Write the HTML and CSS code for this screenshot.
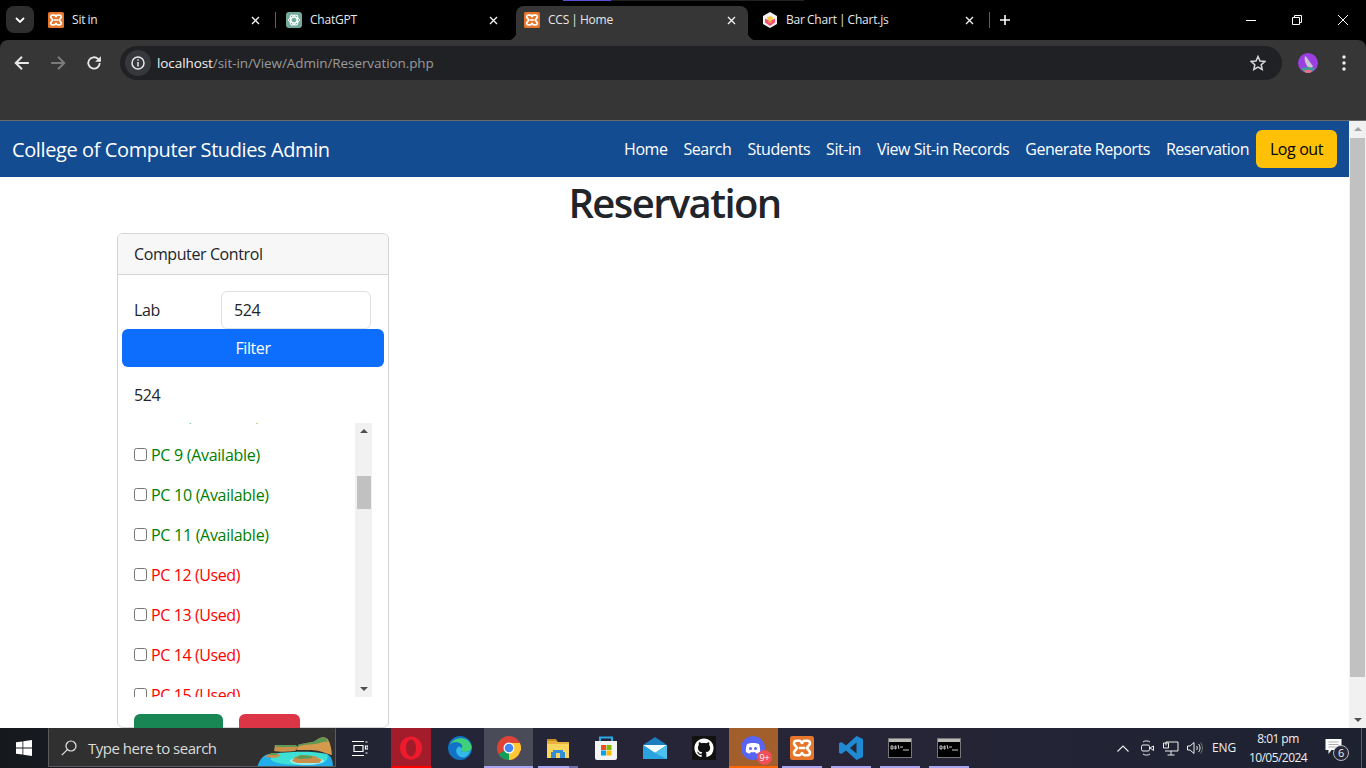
FILE: index.html
```html
<!DOCTYPE html>
<html lang="en">
<head>
<meta charset="utf-8">
<title>CCS | Home</title>
<link rel="stylesheet" href="styles.css">
</head>
<body>
<svg class="defs" width="0" height="0" aria-hidden="true">
  <symbol id="xampp" viewBox="0 0 16 16">
    <rect width="16" height="16" rx="1.500" fill="#e5762b"/>
    <path d="M4.200 3.200h2.300c1 0 1 1.500 1.500 1.500s.5-1.500 1.500-1.500h2.300a1.600 1.600 0 0 1 1.100 2.700L11.200 8l1.700 2.100a1.600 1.600 0 0 1-1.100 2.700H9.500c-1 0-1-1.500-1.500-1.500s-.5 1.500-1.500 1.500H4.200a1.600 1.600 0 0 1-1.100-2.700L4.800 8 3.100 5.900a1.600 1.600 0 0 1 1.100-2.700zM6 8h4" fill="none" stroke="#fff" stroke-width="1.700"/>
  </symbol>
  <symbol id="terminal" viewBox="0 0 24 20">
    <rect x=".5" y=".5" width="23" height="19" fill="#000" stroke="#777"/>
    <rect x="1" y="1" width="22" height="3" fill="#bbb"/>
    <path d="M3 8h2v3H3zM7 8h1v3H7zM10 7l1 4M12 9h3M15 12h6" stroke="#ccc" fill="none"/>
  </symbol>
  <symbol id="close" viewBox="0 0 9 9">
    <path d="M1 1l7 7M8 1L1 8" stroke="#f0f0f0" stroke-width="1.400"/>
  </symbol>
</svg>

<header class="browser">
  <div class="tabstrip">
    <span class="strip-mark"></span>
    <button class="tab-toggle">
      <svg width="10" height="6" viewBox="0 0 10 6"><path d="M1 1l4 4 4-4" fill="none" stroke="#fff" stroke-width="1.800"/></svg>
    </button>
    <div class="tab tab-sep">
      <svg class="favicon"><use href="#xampp"/></svg>
      <span class="tab-title">Sit in</span>
      <svg class="tab-close"><use href="#close"/></svg>
    </div>
    <div class="tab">
      <svg class="favicon" viewBox="0 0 16 16">
        <rect width="16" height="16" rx="3" fill="#74aa9c"/>
        <g fill="none" stroke="#fff" stroke-width="1">
          <ellipse cx="8" cy="8" rx="5.500" ry="2.800"/>
          <ellipse cx="8" cy="8" rx="5.500" ry="2.800" transform="rotate(60 8 8)"/>
          <ellipse cx="8" cy="8" rx="5.500" ry="2.800" transform="rotate(120 8 8)"/>
        </g>
      </svg>
      <span class="tab-title">ChatGPT</span>
      <svg class="tab-close"><use href="#close"/></svg>
    </div>
    <div class="tab tab-active">
      <svg class="favicon"><use href="#xampp"/></svg>
      <span class="tab-title">CCS | Home</span>
      <svg class="tab-close"><use href="#close"/></svg>
    </div>
    <div class="tab tab-sep">
      <svg class="favicon" viewBox="0 0 16 16">
        <path d="M8 0l7 4v8l-7 4-7-4V4z" fill="#f6f2f2"/>
        <path d="M3 6.500l5 2.500 5-2.500v4L8 14l-5-3.500z" fill="#f0506e"/>
        <path d="M5 5.500L8 4l3 1.500v2L8 9 5 7.500z" fill="#f7c948"/>
        <path d="M8 9l2-1v2l-2 1.500L6 10V8z" fill="#f58a5a"/>
      </svg>
      <span class="tab-title">Bar Chart | Chart.js</span>
      <svg class="tab-close"><use href="#close"/></svg>
    </div>
    <button class="tab-new">
      <svg width="12" height="12" viewBox="0 0 12 12"><path d="M6 1v10M1 6h10" stroke="#fff" stroke-width="1.600"/></svg>
    </button>
    <div class="win-controls">
      <span class="win-btn"><svg width="10" height="10" viewBox="0 0 10 10"><path d="M0 5.500h10" stroke="#fff"/></svg></span>
      <span class="win-btn"><svg width="10" height="10" viewBox="0 0 10 10"><path d="M.5 2.500h7v7h-7zM2.500 2.500v-2h7v7h-2" fill="none" stroke="#fff"/></svg></span>
      <span class="win-btn"><svg width="10" height="10" viewBox="0 0 10 10"><path d="M0 0l10 10M10 0L0 10" stroke="#fff"/></svg></span>
    </div>
  </div>
  <div class="toolbar">
    <svg class="tool" viewBox="0 0 14 14"><path d="M13 7H2M7 1.500L1.500 7 7 12.500" fill="none" stroke="#e8e8e8" stroke-width="1.700"/></svg>
    <svg class="tool" viewBox="0 0 14 14"><path d="M1 7h11M7 1.500L12.500 7 7 12.500" fill="none" stroke="#7b7b7b" stroke-width="1.700"/></svg>
    <svg class="tool" viewBox="0 0 14 14"><path d="M12 7a5 5 0 1 1-1.500-3.600L12.500 5" fill="none" stroke="#e8e8e8" stroke-width="1.600"/><path d="M13 1v5H8z" fill="#e8e8e8"/></svg>
    <div class="omnibox">
      <span class="site-info">
        <svg width="14" height="14" viewBox="0 0 14 14"><circle cx="7" cy="7" r="6" fill="none" stroke="#e8e8e8" stroke-width="1.500"/><path d="M7 6v4.500M7 3.300v1.500" stroke="#e8e8e8" stroke-width="1.500"/></svg>
      </span>
      <span class="url"><b>localhost</b>/sit-in/View/Admin/Reservation.php</span>
      <svg class="star" width="16" height="16" viewBox="0 0 16 16"><path d="M8 1.500l2 4.500 4.800.5-3.600 3.200 1 4.800L8 12l-4.200 2.500 1-4.800L1.200 6.500 6 6z" fill="none" stroke="#d8d8d8" stroke-width="1.500"/></svg>
    </div>
    <svg class="avatar" width="20" height="20" viewBox="0 0 20 20">
      <circle cx="10" cy="10" r="10" fill="#9a3fe0"/>
      <path d="M7 3c2 1 4 5 8 10l-2 3-4-3C7 10 6 6 7 3z" fill="#c9c4cf"/>
      <path d="M3 15c4-1 10-1 14 0-2 3-4 5-7 5s-5-2-7-5z" fill="#3f9f8e"/>
      <path d="M6 17.500c3-1 5-1 8 0-1 2-2 2.500-4 2.500s-3-.5-4-2.500z" fill="#e8708c"/>
    </svg>
    <svg class="kebab" width="4" height="16" viewBox="0 0 4 16"><circle cx="2" cy="2" r="1.700" fill="#f0f0f0"/><circle cx="2" cy="8" r="1.700" fill="#f0f0f0"/><circle cx="2" cy="14" r="1.700" fill="#f0f0f0"/></svg>
  </div>
  <div class="bookmarks"></div>
</header>

<div class="viewport">
  <main class="page">
    <nav class="navbar">
      <a class="brand">College of Computer Studies Admin</a>
      <ul class="nav-links">
        <li>Home</li>
        <li>Search</li>
        <li>Students</li>
        <li>Sit-in</li>
        <li>View Sit-in Records</li>
        <li>Generate Reports</li>
        <li>Reservation</li>
      </ul>
      <button class="btn btn-logout">Log out</button>
    </nav>
    <h1 class="title">Reservation</h1>
    <section class="card">
      <div class="card-header">Computer Control</div>
      <div class="card-body">
        <div class="lab-row">
          <label class="lab-label">Lab</label>
          <input class="lab-input" type="text" value="524">
        </div>
        <button class="btn btn-filter">Filter</button>
        <p class="lab-name">524</p>
        <div class="pc-box">
          <ul class="pc-list">
            <li class="pc pc-free"><input type="checkbox"><span>PC 8 (Available)</span></li>
            <li class="pc pc-free"><input type="checkbox"><span>PC 9 (Available)</span></li>
            <li class="pc pc-free"><input type="checkbox"><span>PC 10 (Available)</span></li>
            <li class="pc pc-free"><input type="checkbox"><span>PC 11 (Available)</span></li>
            <li class="pc pc-used"><input type="checkbox"><span>PC 12 (Used)</span></li>
            <li class="pc pc-used"><input type="checkbox"><span>PC 13 (Used)</span></li>
            <li class="pc pc-used"><input type="checkbox"><span>PC 14 (Used)</span></li>
            <li class="pc pc-used"><input type="checkbox"><span>PC 15 (Used)</span></li>
          </ul>
          <div class="mini-scroll">
            <span class="arrow-up"></span>
            <span class="mini-thumb"></span>
            <span class="arrow-down"></span>
          </div>
        </div>
        <div class="card-actions">
          <button class="btn btn-available">Available</button>
          <button class="btn btn-used">Used</button>
        </div>
      </div>
    </section>
  </main>
  <div class="page-scroll">
    <span class="arrow-up"></span>
    <span class="page-thumb"></span>
    <span class="arrow-down"></span>
  </div>
</div>

<footer class="taskbar">
  <div class="start">
    <svg width="16" height="16" viewBox="0 0 16 16"><path d="M0 2.300l6.500-.9v6.200H0zM7.300 1.300L16 0v7.600H7.300zM0 8.400h6.500v6.200L0 13.700zM7.300 8.400H16V16l-8.700-1.300z" fill="#fff"/></svg>
  </div>
  <div class="search">
    <svg class="search-icon" width="16" height="16" viewBox="0 0 16 16"><circle cx="10" cy="6" r="5" fill="none" stroke="#e6e6e6" stroke-width="1.200"/><path d="M6.300 9.700L.8 15.200" stroke="#e6e6e6" stroke-width="1.200"/></svg>
    <span class="search-text">Type here to search</span>
    <svg class="island" width="78" height="31" viewBox="8 7 78 31">
      <path d="M8 38c2-8 6-13 12-14h58c4 2 6 6 6 14z" fill="#22aeea"/>
      <path d="M22 24c13-2 38-4 56 0 2 4 0 9-8 9-15 3-40 3-48-3z" fill="#3ce0d4"/>
      <ellipse cx="58" cy="31" rx="17" ry="4" fill="#9deef0"/>
      <path d="M25 21l1-6 22 1 1 2-3 3c-8 1-16 1-21 0z" fill="#c98f4b"/>
      <path d="M27 15h20l1 2H27z" fill="#5f9a55"/>
      <path d="M48 20l1-5c6-2 13-2 17-4 4-3 8-5 11-3 3 1 5 7 6 17-8-2-13-5-21-5z" fill="#d49a4e"/>
      <path d="M49 15c6-2 13-2 17-4 4-3 8-5 11-3l2 4c-5-1-8 2-13 2-6 1-12 0-17 3z" fill="#5f9a55"/>
      <path d="M43 31l3-4 6-2 14 1 7 4-3 3H48z" fill="#c98f4b"/>
      <path d="M46 28l6-3 10 1 2 2-12 1z" fill="#5f9a55"/>
      <path d="M16 27l4-3h10l1 2-5 2z" fill="#c98f4b"/>
      <path d="M19 25l3-2h5l1 2z" fill="#5f9a55"/>
    </svg>
  </div>
  <ul class="apps">
    <li class="app app-taskview">
      <svg width="16" height="17" viewBox="0 0 16 17"><path d="M0 1.500h12M2 5.500h9v6H2zM0 15.500h12M13.500 2h2M13.500 6h2.500v3h-2.500zM13.500 13h2" fill="none" stroke="#fff" stroke-width="1.200"/></svg>
    </li>
    <li class="app app-alert">
      <svg width="24" height="24" viewBox="0 0 24 24"><ellipse cx="12" cy="12" rx="11" ry="11.500" fill="#ee1b2e"/><ellipse cx="12" cy="12" rx="5" ry="8.500" fill="#a11c29"/></svg>
    </li>
    <li class="app">
      <svg width="24" height="24" viewBox="0 0 24 24">
        <circle cx="12" cy="12" r="12" fill="#1273c4"/>
        <path d="M2 9C5 1 20-1 23.500 10c.8 4-2 6-6 6-3 0-5-1-4.500-3 .3-2 2-2 1-4C11 5 4 5 2 9z" fill="#3fd07b"/>
        <path d="M11 20c-3-2-4-7-1-9 2-1 3 0 3 2-.5 2 1.500 3 4.500 3 2 0 4-.7 5-2-1 5-6 10-11.500 6z" fill="#36b8e8"/>
      </svg>
    </li>
    <li class="app app-running app-focus">
      <svg width="24" height="24" viewBox="0 0 24 24">
        <circle cx="12" cy="12" r="12" fill="#db4437"/>
        <path d="M12 12L1.600 18a12 12 0 0 0 10.400 6 12 12 0 0 0 2-.2L18 12z" fill="#0f9d58"/>
        <path d="M12 12h11.500A12 12 0 0 1 12 24z" fill="#fcc934"/>
        <path d="M12 7h10.900a12 12 0 0 1 .8 8L18 12z" fill="#fcc934"/>
        <circle cx="12" cy="12" r="5.500" fill="#fff"/>
        <circle cx="12" cy="12" r="4.300" fill="#4285f4"/>
      </svg>
    </li>
    <li class="app app-running app-stack">
      <svg width="22" height="20" viewBox="0 0 22 20">
        <path d="M0 2h9l2 2h11v16H0z" fill="#e8b33c"/>
        <path d="M0 1h9l1 2H0z" fill="#c98f1e"/>
        <path d="M0 6h22v14H0z" fill="#fbd65e"/>
        <path d="M6 12h10v2h2v6H4v-6h2z" fill="#2f8fd8"/>
        <path d="M9 15h4v5H9z" fill="#fbd65e"/>
      </svg>
    </li>
    <li class="app">
      <svg width="24" height="24" viewBox="0 0 24 24">
        <path d="M6 6V1.500h12V6" fill="none" stroke="#2aa8e8" stroke-width="2"/>
        <path d="M1 5h22v17a2 2 0 0 1-2 2H3a2 2 0 0 1-2-2z" fill="#f4f4f4"/>
        <path d="M7 9h5v5H7z" fill="#f25022"/><path d="M12.500 9h5v5h-5z" fill="#7fba00"/>
        <path d="M7 14.500h5v5H7z" fill="#00a4ef"/><path d="M12.500 14.500h5v5h-5z" fill="#ffb900"/>
      </svg>
    </li>
    <li class="app">
      <svg width="24" height="22" viewBox="0 0 24 22">
        <path d="M0 8l12-8 12 8v14H0z" fill="#1c7cc0"/>
        <path d="M0 8h24l-12 8z" fill="#f2fbff"/>
        <path d="M0 8l12 8 12-8v14H0z" fill="#29a4e0"/>
        <path d="M12 16l12-8v14z" fill="#4ec0ee"/>
      </svg>
    </li>
    <li class="app">
      <svg class="gh" width="24" height="24" viewBox="-2 -2 20 20"><rect x="-2" y="-2" width="20" height="20" fill="#111"/><path fill="#fff" d="M8 0C3.580 0 0 3.580 0 8c0 3.540 2.290 6.530 5.470 7.590.4.070.55-.17.55-.38 0-.19-.01-.82-.01-1.490-2.010.37-2.530-.49-2.690-.94-.09-.23-.48-.94-.82-1.130-.28-.15-.68-.52-.01-.53.63-.01 1.080.58 1.230.82.720 1.210 1.870.87 2.330.66.070-.52.28-.87.51-1.070-1.780-.2-3.640-.89-3.640-3.950 0-.87.31-1.590.82-2.150-.08-.2-.36-1.020.08-2.120 0 0 .67-.21 2.200.82.64-.18 1.320-.27 2-.27.68 0 1.360.09 2 .27 1.530-1.040 2.200-.82 2.200-.82.44 1.100.16 1.920.08 2.120.51.56.82 1.270.82 2.150 0 3.070-1.870 3.750-3.650 3.950.29.25.54.73.54 1.480 0 1.070-.01 1.930-.01 2.200 0 .21.15.46.55.38A8.013 8.013 0 0 0 16 8c0-4.420-3.580-8-8-8z"/></svg>
    </li>
    <li class="app app-notify">
      <span class="discord">
        <svg width="24" height="24" viewBox="0 0 24 24"><circle cx="12" cy="12" r="12" fill="#5865f2"/><path d="M6 8c3-1.500 9-1.500 12 0 1 3 1.500 6 1 8-1.500 1-3 1.500-4 1.500l-1-1.500c-1.500.4-2.500.4-4 0l-1 1.500c-1 0-2.500-.5-4-1.500-.5-2 0-5 1-8z" fill="#fff"/><circle cx="9.500" cy="12.500" r="1.500" fill="#5865f2"/><circle cx="14.500" cy="12.500" r="1.500" fill="#5865f2"/></svg>
        <span class="badge">9+</span>
      </span>
    </li>
    <li class="app app-running">
      <svg width="24" height="24"><use href="#xampp"/></svg>
    </li>
    <li class="app app-running">
      <svg width="24" height="24" viewBox="0 0 24 24"><path d="M17.500 0L24 3v18l-6.500 3L7 14.500 2.500 18 0 16.800V7.200L2.500 6 7 9.500zM17.500 6.500L11 12l6.500 5.500z" fill="#1f8ad2"/></svg>
    </li>
    <li class="app app-running">
      <svg width="24" height="20"><use href="#terminal"/></svg>
    </li>
    <li class="app app-running">
      <svg width="24" height="20"><use href="#terminal"/></svg>
    </li>
  </ul>
  <div class="tray">
    <span class="tray-item">
      <svg width="12" height="7" viewBox="0 0 12 7"><path d="M.5 6.500L6 1l5.500 5.500" fill="none" stroke="#eee" stroke-width="1.100"/></svg>
    </span>
    <span class="tray-item">
      <svg width="13" height="16" viewBox="0 0 13 16"><path d="M2 2c2-1.500 5-1.500 7 0M2 14c2 1.500 5 1.500 7 0" fill="none" stroke="#eee"/><rect x=".5" y="5" width="8" height="6" rx="1.500" fill="none" stroke="#eee"/><path d="M9 8l3.500-2v4.500z" fill="none" stroke="#eee"/></svg>
    </span>
    <span class="tray-item">
      <svg width="16" height="15" viewBox="0 0 16 15"><path d="M3 4.500V1h12v9H2M8 10v4M4.500 14h7M.5 2h5v5h-5z" fill="none" stroke="#eee"/></svg>
    </span>
    <span class="tray-item">
      <svg width="16" height="14" viewBox="0 0 16 14"><path d="M.5 5h2.500L7 1.500v11L3 9H.5zM9.500 5c1 1 1 3 0 4M11.500 3c2 2 2 6 0 8" fill="none" stroke="#eee"/><path d="M13.500 1.500c2.500 3 2.500 8 0 11" fill="none" stroke="#777"/></svg>
    </span>
    <span class="tray-lang">ENG</span>
    <span class="clock"><span>8:01 pm</span><span>10/05/2024</span></span>
    <span class="notif">
      <svg width="17" height="15" viewBox="0 0 16 15"><path d="M0 0h16v11H6l-3 4v-4H0z" fill="#fff"/><path d="M3 3h10M3 5.500h10M3 8h7" stroke="#999" stroke-width=".8"/></svg>
      <span class="notif-count">6</span>
    </span>
    <span class="show-desktop"></span>
  </div>
</footer>
</body>
</html>
```

FILE: styles.css
```css
* {
  box-sizing: border-box;
}
html, body {
  margin: 0;
  padding: 0;
  height: 768px;
  overflow: hidden;
}
body {
  display: flex;
  flex-direction: column;
  font-family: "Open Sans", "Noto Sans", sans-serif;
  font-size: 16px;
  letter-spacing: -0.4px;
  line-height: 24px;
  color: #212529;
  background: #fff;
}
ul {
  list-style: none;
  margin: 0;
  padding: 0;
}
button {
  font: inherit;
  letter-spacing: inherit;
  border: none;
  cursor: pointer;
}
.defs {
  position: absolute;
}

/* browser frame */
.browser {
  height: 121px;
  flex: none;
  background: #000;
  border-bottom: 1px solid #6a6a6a;
  display: flex;
  flex-direction: column;
}
.tabstrip {
  position: relative;
  height: 40px;
  flex: none;
  display: flex;
  align-items: flex-start;
  color: #e8e8e8;
  font-size: 12px;
  letter-spacing: -0.2px;
  word-spacing: -0.700px;
}
.strip-mark {
  position: absolute;
  top: 0;
  left: 563px;
  width: 241px;
  height: 1px;
  background: linear-gradient(90deg, #5a50d8 0, #5a50d8 48px, #222 48px);
}
.tab-toggle {
  width: 28px;
  height: 27px;
  margin: 6px 6px 0;
  border-radius: 8px;
  background: #2e2e2e;
  display: flex;
  align-items: center;
  justify-content: center;
}
.tab {
  position: relative;
  width: 232px;
  height: 34px;
  margin: 6px 6px 0 0;
  padding: 0 12px 6px 8px;
  display: flex;
  align-items: center;
}
.tab-sep::after {
  content: "";
  position: absolute;
  right: -4px;
  top: 6px;
  width: 1px;
  height: 16px;
  background: #5f5f5f;
}
.tab-active {
  background: #363636;
  border-radius: 8px 8px 0 0;
}
.tab-active::before,
.tab-active::after {
  content: "";
  position: absolute;
  bottom: 0;
  width: 8px;
  height: 8px;
}
.tab-active::before {
  left: -8px;
  background: radial-gradient(circle at 0 0, #000 8px, #363636 8.500px);
}
.tab-active::after {
  right: -8px;
  background: radial-gradient(circle at 100% 0, #000 8px, #363636 8.500px);
}
.favicon {
  width: 16px;
  height: 16px;
  flex: none;
  margin-right: 8px;
}
.tab-title {
  flex: 1;
  white-space: nowrap;
}
.tab-close {
  width: 9px;
  height: 9px;
  flex: none;
}
.tab-new {
  width: 26px;
  height: 28px;
  margin-top: 6px;
  background: none;
  display: flex;
  align-items: center;
  justify-content: center;
}
.win-controls {
  margin-left: auto;
  display: flex;
}
.win-btn {
  width: 46px;
  height: 40px;
  display: flex;
  align-items: center;
  justify-content: center;
}
.toolbar {
  height: 40px;
  flex: none;
  background: #363636;
  border-radius: 8px 8px 0 0;
  display: flex;
  align-items: flex-start;
  padding: 6px 0 0 14px;
}
.tool {
  width: 16px;
  height: 16px;
  margin: 9px 20px 0 0;
  flex: none;
}
.omnibox {
  width: 1162px;
  height: 34px;
  margin-left: -2px;
  border-radius: 17px;
  background: #202124;
  display: flex;
  align-items: center;
  padding: 0 16px 0 5px;
}
.site-info {
  width: 26px;
  height: 26px;
  border-radius: 50%;
  background: #37383b;
  display: flex;
  align-items: center;
  justify-content: center;
}
.url {
  margin-left: 6px;
  font-size: 13.500px;
  letter-spacing: -0.08px;
  color: #9a9b9d;
}
.url b {
  font-weight: 400;
  color: #f1f1f1;
}
.star {
  margin-left: auto;
}
.avatar {
  margin: 7px 0 0 16px;
}
.kebab {
  margin: 9px 0 0 24px;
}
.bookmarks {
  flex: 1;
  background: #363636;
}

/* page */
.viewport {
  height: 607px;
  flex: none;
  display: flex;
  overflow: hidden;
}
.page {
  flex: 1;
  min-width: 0;
  height: 607px;
  overflow: hidden;
}
.page-scroll {
  width: 17px;
  flex: none;
  background: #f1f1f1;
  display: flex;
  flex-direction: column;
  align-items: center;
  padding-top: 6px;
}
.page-scroll .arrow-down {
  margin: auto 0 6px;
}
.page-thumb {
  width: 15px;
  height: 539px;
  margin-top: 7px;
  background: #c1c1c1;
}
.arrow-up,
.arrow-down {
  width: 0;
  height: 0;
  flex: none;
  border-left: 4px solid transparent;
  border-right: 4px solid transparent;
}
.arrow-up {
  border-bottom: 4px solid #a3a3a3;
}
.arrow-down {
  border-top: 4px solid #505050;
}

.navbar {
  height: 56px;
  background: #144c92;
  display: flex;
  align-items: center;
  padding: 0 12px;
  color: #fff;
}
.brand {
  font-size: 20px;
  padding-top: 2px;
}
.nav-links {
  margin-left: auto;
  display: flex;
  gap: 16px;
  margin-right: 7px;
  letter-spacing: -0.45px;
}
.btn {
  height: 38px;
  padding: 0 12px;
  border-radius: 6px;
  color: #fff;
}
.btn-logout {
  width: 81px;
  background: #ffc107;
  color: #000;
}
.title {
  margin: 0 0 6px;
  padding-top: 2px;
  font-size: 40px;
  font-weight: 600;
  line-height: 48px;
  letter-spacing: -1.600px;
  text-align: center;
}

.card {
  width: 272px;
  height: 495px;
  margin-left: 117px;
  border: 1px solid #d3d4d5;
  border-radius: 6px;
}
.card-header {
  height: 41px;
  padding: 8px 16px;
  background: #f7f7f7;
  border-bottom: 1px solid #d3d4d5;
  border-radius: 5px 5px 0 0;
}
.card-body {
  padding: 16px;
}
.lab-row {
  display: flex;
  align-items: center;
}
.lab-label {
  width: 87px;
}
.lab-input {
  width: 150px;
  height: 38px;
  padding: 0 12px;
  border: 1px solid #dee2e6;
  border-radius: 6px;
  font: inherit;
  letter-spacing: inherit;
  color: #212529;
}
.btn-filter {
  display: block;
  width: 262px;
  margin: 0 -12px;
  background: #0d6efd;
}
.lab-name {
  margin: 16px 0;
}
.pc-box {
  height: 274px;
  display: flex;
  overflow: hidden;
}
.pc-list {
  flex: 1;
  margin-top: -28px;
}
.pc {
  height: 40px;
  display: flex;
  align-items: center;
}
.pc input {
  width: 13px;
  height: 13px;
  margin: 0 4px 2px 0;
}
.pc-free {
  color: #008000;
  letter-spacing: -0.28px;
}
.pc-used {
  color: #f00;
}
.mini-scroll {
  width: 17px;
  flex: none;
  background: #f1f1f1;
  display: flex;
  flex-direction: column;
  align-items: center;
  padding-top: 6px;
}
.mini-scroll .arrow-up {
  border-bottom-color: #505050;
}
.mini-thumb {
  width: 14px;
  height: 33px;
  margin-top: 43px;
  background: #c1c1c1;
}
.mini-scroll .arrow-down {
  margin: auto 0 6px;
}
.card-actions {
  display: flex;
  gap: 16px;
  margin-top: 17px;
}
.btn-available {
  width: 89px;
  padding-top: 1px;
  background: #198754;
}
.btn-used {
  width: 61px;
  padding-top: 1px;
  background: #dc3545;
}

/* taskbar */
.taskbar {
  height: 40px;
  flex: none;
  display: flex;
  background: linear-gradient(90deg, #15181c 0, #232536 30%, #272537 60%, #1d2231 100%);
  color: #f0f0f0;
  font-size: 12px;
  letter-spacing: -0.2px;
}
.start {
  width: 48px;
  display: flex;
  align-items: center;
  justify-content: center;
}
.search {
  width: 288px;
  height: 39px;
  padding-left: 12px;
  background: #303030;
  border: 1px solid #5c5c5c;
  border-top-color: #303030;
  display: flex;
  align-items: center;
  overflow: hidden;
  font-size: 15px;
  letter-spacing: -0.5px;
  color: #dcdcdc;
}
.search-text {
  margin-left: 11px;
}
.island {
  margin: 10px 0 0 auto;
  flex: none;
}
.apps {
  display: flex;
  margin-left: 1.500px;
}
.app {
  position: relative;
  width: 48.900px;
  height: 40px;
  display: flex;
  align-items: center;
  justify-content: center;
}
.app-taskview svg {
  margin-right: 3px;
}
.app-alert {
  background: linear-gradient(#a31c2b, #a31c2b) center / 40px 100% no-repeat;
}
.app-running::after,
.app-notify::after,
.app-alert::after {
  content: "";
  position: absolute;
  bottom: 0;
  left: 4.500px;
  width: 40px;
  height: 2px;
  background: #aaa5f0;
}
.app-alert::after {
  background: #f00;
}
.app-stack::after {
  background: linear-gradient(90deg, #aaa5f0 31px, #6f6ca8 31px);
}
.app-focus {
  background: #4a4b58;
}
.app-focus::after {
  left: 0;
  width: 100%;
}
.app-notify {
  background: #a25e2b;
}
.app-notify::after {
  left: 0;
  width: 100%;
  background: #f60;
}
.discord {
  position: relative;
  display: flex;
}
.badge {
  position: absolute;
  right: -7px;
  bottom: -5px;
  width: 15px;
  height: 15px;
  border-radius: 50%;
  background: #f04f58;
  color: #fff;
  font-size: 9px;
  line-height: 15px;
  text-align: center;
  letter-spacing: 0;
}
.tray {
  margin-left: auto;
  display: flex;
  align-items: center;
}
.tray-item {
  width: 24px;
  height: 40px;
  display: flex;
  align-items: center;
  justify-content: center;
}
.tray-lang {
  width: 34px;
  text-align: center;
}
.clock {
  width: 74px;
  display: flex;
  flex-direction: column;
  align-items: center;
  line-height: 19px;
  letter-spacing: -0.55px;
}
.notif {
  position: relative;
  width: 36px;
  display: flex;
  justify-content: center;
  margin-top: -3px;
}
.notif-count {
  position: absolute;
  left: 18px;
  top: 6px;
  width: 16px;
  height: 16px;
  border: 1px solid #bbb;
  border-radius: 50%;
  background: #26273a;
  font-size: 11px;
  line-height: 14px;
  text-align: center;
}
.show-desktop {
  width: 5px;
  height: 40px;
  border-left: 1px solid #5a5a66;
  margin-left: 10px;
}
```
